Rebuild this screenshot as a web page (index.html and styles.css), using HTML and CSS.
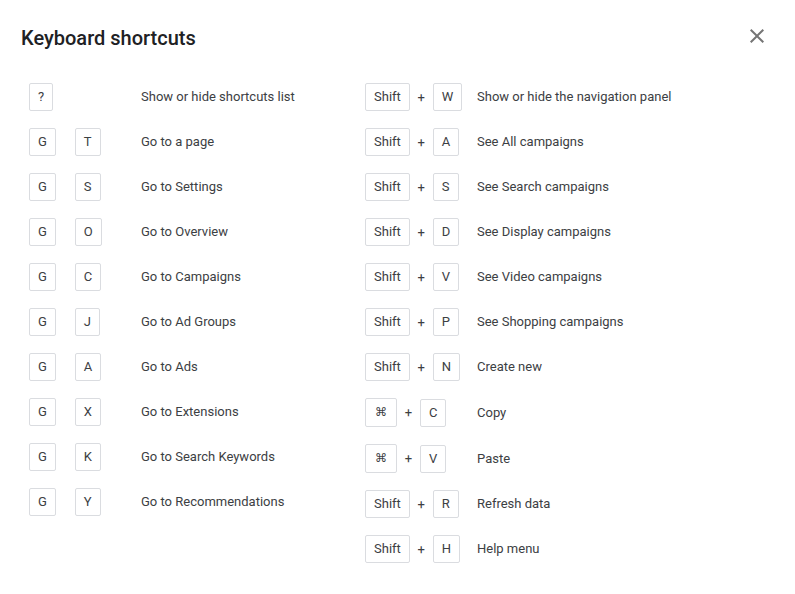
FILE: index.html
```html
<!DOCTYPE html>
<html lang="en">
<head>
    <meta charset="UTF-8">
    <title>Keyboard shortcuts</title>
    <link rel="stylesheet" href="styles.css">
</head>
<body>
    <div class="dialog">
        <div class="header">
            <h1>Keyboard shortcuts</h1>
            <button class="close" aria-label="Close">
                <svg width="24" height="24" viewBox="0 0 24 24"><path d="M19 6.41L17.59 5 12 10.59 6.41 5 5 6.41 10.59 12 5 17.59 6.41 19 12 13.41 17.59 19 19 17.59 13.41 12z"/></svg>
            </button>
        </div>

        <div class="shortcuts">
            <div class="column">
                <div class="row"><div class="keys"><span class="key">?</span></div><div class="desc">Show or hide shortcuts list</div></div>
                <div class="row"><div class="keys"><span class="key">G</span><span class="sep blank"></span><span class="key">T</span></div><div class="desc">Go to a page</div></div>
                <div class="row"><div class="keys"><span class="key">G</span><span class="sep blank"></span><span class="key">S</span></div><div class="desc">Go to Settings</div></div>
                <div class="row"><div class="keys"><span class="key">G</span><span class="sep blank"></span><span class="key">O</span></div><div class="desc">Go to Overview</div></div>
                <div class="row"><div class="keys"><span class="key">G</span><span class="sep blank"></span><span class="key">C</span></div><div class="desc">Go to Campaigns</div></div>
                <div class="row"><div class="keys"><span class="key">G</span><span class="sep blank"></span><span class="key">J</span></div><div class="desc">Go to Ad Groups</div></div>
                <div class="row"><div class="keys"><span class="key">G</span><span class="sep blank"></span><span class="key">A</span></div><div class="desc">Go to Ads</div></div>
                <div class="row"><div class="keys"><span class="key">G</span><span class="sep blank"></span><span class="key">X</span></div><div class="desc">Go to Extensions</div></div>
                <div class="row"><div class="keys"><span class="key">G</span><span class="sep blank"></span><span class="key">K</span></div><div class="desc">Go to Search Keywords</div></div>
                <div class="row"><div class="keys"><span class="key">G</span><span class="sep blank"></span><span class="key">Y</span></div><div class="desc">Go to Recommendations</div></div>
            </div>

            <div class="column">
                <div class="row"><div class="keys"><span class="key">Shift</span><span class="sep">+</span><span class="key">W</span></div><div class="desc">Show or hide the navigation panel</div></div>
                <div class="row"><div class="keys"><span class="key">Shift</span><span class="sep">+</span><span class="key">A</span></div><div class="desc">See All campaigns</div></div>
                <div class="row"><div class="keys"><span class="key">Shift</span><span class="sep">+</span><span class="key">S</span></div><div class="desc">See Search campaigns</div></div>
                <div class="row"><div class="keys"><span class="key">Shift</span><span class="sep">+</span><span class="key">D</span></div><div class="desc">See Display campaigns</div></div>
                <div class="row"><div class="keys"><span class="key">Shift</span><span class="sep">+</span><span class="key">V</span></div><div class="desc">See Video campaigns</div></div>
                <div class="row"><div class="keys"><span class="key">Shift</span><span class="sep">+</span><span class="key">P</span></div><div class="desc">See Shopping campaigns</div></div>
                <div class="row"><div class="keys"><span class="key">Shift</span><span class="sep">+</span><span class="key">N</span></div><div class="desc">Create new</div></div>
                <div class="row"><div class="keys"><span class="key cmd">⌘</span><span class="sep">+</span><span class="key">C</span></div><div class="desc">Copy</div></div>
                <div class="row"><div class="keys"><span class="key cmd">⌘</span><span class="sep">+</span><span class="key">V</span></div><div class="desc">Paste</div></div>
                <div class="row"><div class="keys"><span class="key">Shift</span><span class="sep">+</span><span class="key">R</span></div><div class="desc">Refresh data</div></div>
                <div class="row"><div class="keys"><span class="key">Shift</span><span class="sep">+</span><span class="key">H</span></div><div class="desc">Help menu</div></div>
            </div>
        </div>
    </div>
</body>
</html>
```

FILE: styles.css
```css
body {
    margin: 0;
    background-color: #fff;
    font-family: Roboto, "Liberation Sans", Arial, sans-serif;
    color: #3c4043;
}

.dialog {
    padding: 24px 26px 0 21px;
}

.header {
    display: flex;
    justify-content: space-between;
    align-items: flex-start;
}

h1 {
    margin: 2px 0 0;
    font-size: 20px;
    line-height: 24px;
    font-weight: 500;
    color: #202124;
}

.close {
    width: 24px;
    height: 24px;
    padding: 0;
    border: none;
    background: none;
    cursor: pointer;
}

.close svg {
    display: block;
    fill: #757575;
}

.shortcuts {
    display: flex;
    margin-top: 33px;
    padding-left: 8px;
}

.column {
    width: 336px;
    display: flex;
    flex-direction: column;
    gap: 17px;
}

.row {
    display: flex;
    align-items: center;
    font-size: 13px;
}

.keys {
    width: 112px;
    flex: none;
    display: flex;
    align-items: center;
}

.key {
    border: 1px solid #dadce0;
    border-radius: 2px;
    padding: 0 8px;
    line-height: 26px;
    color: #3c4043;
}

.key.cmd {
    line-height: 27px;
    font-family: "DejaVu Sans", sans-serif;
    font-size: 12px;
    padding: 0 9px;
}

.sep {
    width: 23px;
    text-align: center;
}

.sep.blank {
    width: 19px;
}

.desc {
    line-height: 20px;
}
```
